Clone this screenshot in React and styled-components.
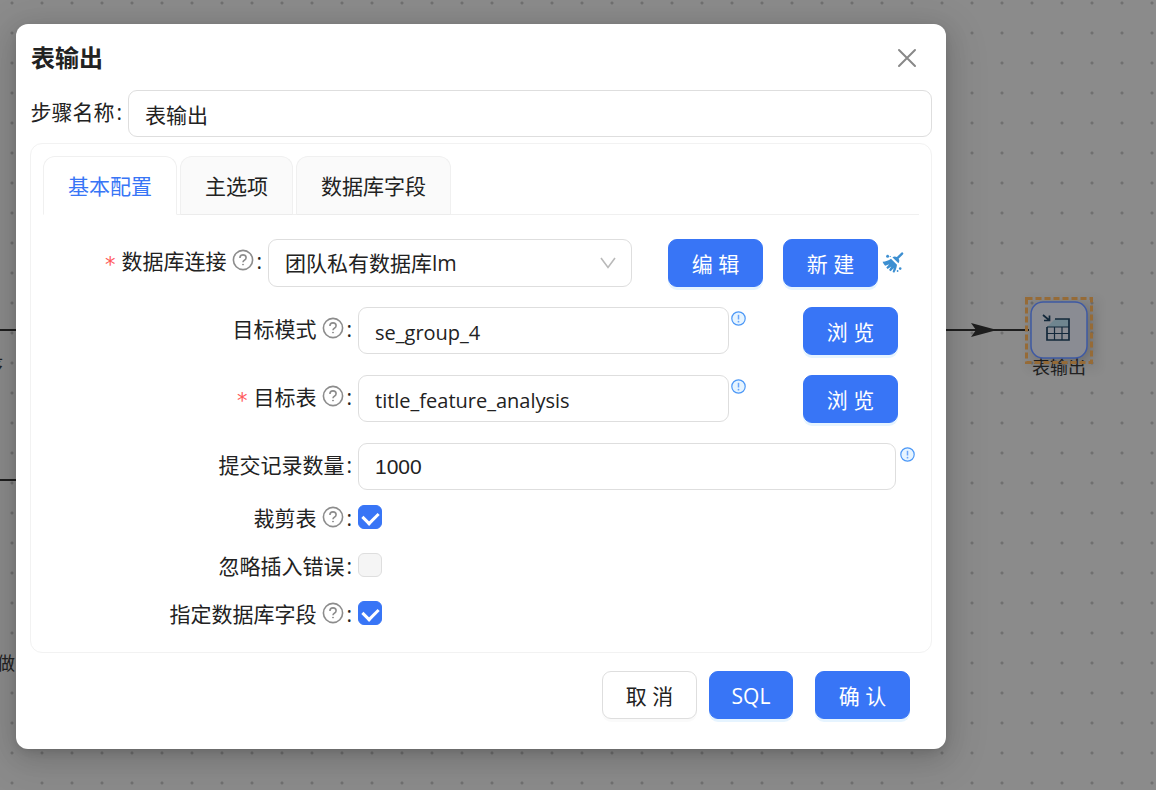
import React from "react";
import styled, { createGlobalStyle } from "styled-components";

const latin = '"Open Sans", "Noto Sans CJK SC", sans-serif';
const blue = "#3875f6";

const GlobalStyle = createGlobalStyle`
  * { box-sizing: border-box; }
  body {
    margin: 0;
    font-family: ${latin};
    font-size: 21px;
    line-height: 32px;
    color: #222;
    overflow: hidden;
  }
  button, input, select { font: inherit; color: inherit; }
`;

const Page = styled.div`
  position: relative;
  min-height: 100vh;
  overflow: hidden;
  background-color: #8b8b8b;
  background-image: radial-gradient(circle, #707070 1px, transparent 2px);
  background-size: 30px 30px;
  background-position: -3px -12px;
`;

const Canvas = styled.div`
  position: absolute;
  inset: 0;
`;

const Wires = styled.svg`
  position: absolute;
  left: 0;
  top: 0;
`;

const CanvasText = styled.span`
  position: absolute;
  left: ${(p) => p.$x}px;
  top: ${(p) => p.$y}px;
  font-size: 18px;
  line-height: 24px;
  white-space: nowrap;
  color: #222;
`;

const Node = styled.div`
  position: absolute;
  left: 1025px;
  top: 297px;
  width: 68px;
  height: 67px;
  filter: drop-shadow(4px 4px 5px rgba(0, 0, 0, 0.2));
`;

const Overlay = styled.div`
  position: relative;
  padding: 24px 210px 40px 16px;
`;

const Dialog = styled.form`
  background: #fff;
  border-radius: 12px;
  padding: 14px 14px 30px;
  box-shadow: 0 9px 42px 8px rgba(0, 0, 0, 0.09), 0 6px 24px rgba(0, 0, 0, 0.14), 0 3px 9px -2px rgba(0, 0, 0, 0.12);
`;

const Header = styled.header`
  display: flex;
  justify-content: space-between;
  align-items: center;
  height: 40px;
  margin-bottom: 12px;
  padding: 0 14px 0 1px;
`;

const Title = styled.h1`
  margin: 0;
  font-size: 24px;
  line-height: 36px;
  font-weight: 700;
`;

const CloseButton = styled.button`
  display: grid;
  place-items: center;
  padding: 0;
  width: 22px;
  height: 22px;
  border: 0;
  background: none;
  color: #888;
`;

const Row = styled.div`
  display: flex;
  align-items: flex-start;
  min-height: ${(p) => p.$height || 48}px;
  padding-right: ${(p) => p.$end || 0}px;
`;

const Label = styled.label`
  flex: none;
  display: flex;
  align-items: center;
  justify-content: flex-end;
  width: ${(p) => p.$width}px;
  height: ${(p) => (p.$compact ? 26 : 44)}px;
  padding-right: 6px;
  white-space: nowrap;
`;

const Required = styled.span`
  padding-top: 8px;
  margin-right: 6px;
  color: #ff5b5b;
  font-family: "DejaVu Sans", sans-serif;
  line-height: 24px;
`;

const Help = styled.svg`
  margin: 0 0 2px 6px;
  color: #8c8c8c;
`;

const Colon = styled.span`
  margin-left: 2px;
`;

const TextInput = styled.input`
  flex: 1;
  min-width: 0;
  height: 47px;
  padding: ${(p) => (p.$latin ? 3 : 0)}px 16px 0;
  border: 1px solid #dedede;
  border-radius: 9px;
  background: #fff;
  outline: none;
  font-family: ${(p) => (p.$number ? '"Liberation Sans", sans-serif' : "inherit")};
  font-size: ${(p) => (p.$latin ? 20 : 21)}px;
`;

const SelectBox = styled.div`
  position: relative;
  flex: 1;
  display: flex;
  margin-right: 36px;
`;

const Select = styled.select`
  appearance: none;
  width: 100%;
  height: 48px;
  padding: 0 16px;
  border: 1px solid #dedede;
  border-radius: 9px;
  background: #fff;
  outline: none;
`;

const Chevron = styled.svg`
  position: absolute;
  right: 16px;
  top: 16px;
  pointer-events: none;
`;

const Button = styled.button`
  flex: none;
  height: 48px;
  padding: 2px 0 0;
  width: ${(p) => p.$width || 95}px;
  border: 1px solid ${(p) => (p.$plain ? "#dedede" : blue)};
  border-radius: 9px;
  background: ${(p) => (p.$plain ? "#fff" : blue)};
  color: ${(p) => (p.$plain ? "#222" : "#fff")};
  box-shadow: 0 3px 0 ${(p) => (p.$plain ? "rgba(0, 0, 0, 0.02)" : "rgba(5, 145, 255, 0.1)")};
`;

const Card = styled.section`
  margin-top: 5px;
  padding: 12px 12px 25px;
  border: 1px solid #f2f2f2;
  border-radius: 12px;
`;

const Tabs = styled.div`
  display: flex;
  gap: 3px;
  border-bottom: 1px solid #f0f0f0;
  margin-bottom: 24px;
`;

const Tab = styled.button`
  height: 59px;
  margin-bottom: -1px;
  padding: 0 24px;
  border: 1px solid #f0f0f0;
  border-bottom-color: ${(p) => (p.$active ? "#fff" : "#ececec")};
  border-radius: 12px 12px 0 0;
  background: ${(p) => (p.$active ? "#fff" : "#fafafa")};
  color: ${(p) => (p.$active ? blue : "#222")};
`;

const Fields = styled.div`
  display: flex;
  flex-direction: column;
  gap: 20px;
`;

const Checks = styled.div`
  display: flex;
  flex-direction: column;
  gap: 22px;
  margin-top: 14px;
`;

const Info = styled.svg`
  flex: none;
  margin: 4px 0 0 ${(p) => p.$gap}px;
`;

const Spacer = styled.span`
  flex: none;
  width: ${(p) => p.$width}px;
`;

const IconButton = styled.button`
  flex: none;
  padding: 0;
  margin: 13px 0 0 4px;
  border: 0;
  background: none;
  line-height: 0;
`;

const Checkbox = styled.input`
  appearance: none;
  display: grid;
  justify-content: center;
  margin: 0;
  width: 24px;
  height: 24px;
  border: 1px solid #dedede;
  border-radius: 6px;
  background: #f5f5f5;

  &:checked {
    border-color: ${blue};
    background: ${blue};
  }

  &:checked::after {
    content: "";
    width: 8px;
    height: 12px;
    margin-top: 3px;
    border: solid #fff;
    border-width: 0 3px 3px 0;
    transform: rotate(45deg);
  }
`;

const Footer = styled.footer`
  display: flex;
  justify-content: flex-end;
  margin-top: 18px;
  padding-right: 22px;
`;

function HelpIcon() {
  return (
    <Help width="22" height="22" viewBox="0 0 22 22" fill="none" stroke="currentColor" strokeWidth="1.6">
      <circle cx="11" cy="11" r="9.6" />
      <path d="M7.9 8.9c0-1.800 1.300-3 3.100-3s3.100 1.100 3.100 2.800c0 1.300-.8 2-1.700 2.500-.9.500-1.400 1-1.400 2" />
      <circle cx="11" cy="15.600" r=".5" fill="currentColor" strokeWidth="1" />
    </Help>
  );
}

function InfoIcon({ gap }) {
  return (
    <Info $gap={gap} width="15" height="15" viewBox="0 0 15 15">
      <circle cx="7.500" cy="7.500" r="6.700" fill="#e6f4ff" stroke="#4b97f7" strokeWidth="1.200" />
      <path d="M7.500 3.800v4.700" stroke="#6ba6fa" strokeWidth="1.500" />
      <circle cx="7.500" cy="10.700" r=".9" fill="#6ba6fa" />
    </Info>
  );
}

function BroomIcon() {
  return (
    <svg width="22" height="22" viewBox="0 0 22 22" fill="#3d8fd1">
      <path d="M20.600.4c.9.600 1 1.400.3 2.100l-4.300 4.200c1 1.500.9 3-.2 4.500L10.400 5.300c1.500-1.100 3-1.200 4.500-.2L19 .9c.5-.5 1-.8 1.600-.5z" />
      <path d="M9 6.800l6 6c-.4 3-1.200 5.700-2.800 8l-1.600-.8 1.200-4-3.100 3.300-1.700-1.200 2.300-3.700-3.700 2.500-1.300-1.400 2.900-3.200-4 1.500C1.900 12.600 1.100 11.300.6 9.800 3.800 9.600 6.600 8.600 9 6.800z" />
      <circle cx="5.600" cy="4.200" r="1.500" />
      <circle cx="18.200" cy="16.600" r="1.300" />
      <circle cx="15.600" cy="19" r=".9" />
      <circle cx="8.300" cy="4.500" r=".6" />
    </svg>
  );
}

function Caption({ id, text, width, compact, required, help }) {
  return (
    <Label htmlFor={id} $width={width} $compact={compact}>
      {required && <Required>*</Required>}
      {text}
      {help && <HelpIcon />}
      <Colon>:</Colon>
    </Label>
  );
}

const checks = [
  { id: "truncate", text: "裁剪表", help: true, on: true },
  { id: "ignore", text: "忽略插入错误", help: false, on: false },
  { id: "specify", text: "指定数据库字段", help: true, on: true },
];

export default function App() {
  return (
    <>
      <GlobalStyle />
      <Page>
        <Canvas>
          <Wires width="1156" height="790" stroke="#1e1e1e" strokeWidth="2">
            <path d="M0 330H16M0 480H16M940 330H1029" />
            <path d="M971 323L997 330L971 337L976 330Z" fill="#1e1e1e" stroke="none" />
          </Wires>
          <CanvasText $x={-15} $y={353}>序</CanvasText>
          <CanvasText $x={-3} $y={651}>做</CanvasText>
          <CanvasText $x={1032} $y={355}>表输出</CanvasText>
          <Node>
            <svg width="68" height="67" viewBox="0 0 68 67" fill="none">
              <rect x="6" y="5" width="56" height="56" rx="12" fill="#8a8c93" stroke="#3e59a4" strokeWidth="1.500" />
              <rect x="1.500" y="1.500" width="65" height="64" stroke="#966b37" strokeWidth="3" strokeDasharray="6 3" />
              <path d="M30 22h14v8H22z" fill="#6f858f" />
              <path d="M30 22h14v21H22V30" stroke="#13283b" strokeWidth="1.700" />
              <path d="M22 30h22M22 36.500h22M29.500 30v13M37 30v13" stroke="#13283b" strokeWidth="1.200" />
              <path d="M18 18l6 5M24.500 18.500v5h-5.500" stroke="#13283b" strokeWidth="1.700" />
            </svg>
          </Node>
        </Canvas>
        <Overlay>
          <Dialog role="dialog" aria-labelledby="title">
            <Header>
              <Title id="title">表输出</Title>
              <CloseButton type="button" aria-label="关闭">
                <svg width="20" height="20" viewBox="0 0 20 20" stroke="currentColor" strokeWidth="2" strokeLinecap="round">
                  <path d="M2 2l16 16M18 2L2 18" />
                </svg>
              </CloseButton>
            </Header>
            <Row>
              <Caption id="step" text="步骤名称" width={98} />
              <TextInput id="step" defaultValue="表输出" />
            </Row>
            <Card>
              <Tabs role="tablist">
                <Tab type="button" role="tab" aria-selected="true" $active>基本配置</Tab>
                <Tab type="button" role="tab" aria-selected="false">主选项</Tab>
                <Tab type="button" role="tab" aria-selected="false">数据库字段</Tab>
              </Tabs>
              <Fields>
                <Row $end={15}>
                  <Caption id="conn" text="数据库连接" width={225} required help />
                  <SelectBox>
                    <Select id="conn">
                      <option>团队私有数据库lm</option>
                    </Select>
                    <Chevron width="16" height="16" viewBox="0 0 16 16" fill="none" stroke="#b9b9b9" strokeWidth="1.600">
                      <path d="M1 3l7 9.500L15 3" />
                    </Chevron>
                  </SelectBox>
                  <Button type="button">编 辑</Button>
                  <Spacer $width={20} />
                  <Button type="button">新 建</Button>
                  <IconButton type="button" aria-label="清除">
                    <BroomIcon />
                  </IconButton>
                </Row>
                <Row $end={21}>
                  <Caption id="schema" text="目标模式" width={315} help />
                  <TextInput id="schema" defaultValue="se_group_4" $latin />
                  <InfoIcon gap={2} />
                  <Spacer $width={57} />
                  <Button type="button">浏 览</Button>
                </Row>
                <Row $end={21}>
                  <Caption id="table" text="目标表" width={315} required help />
                  <TextInput id="table" defaultValue="title_feature_analysis" $latin />
                  <InfoIcon gap={2} />
                  <Spacer $width={57} />
                  <Button type="button">浏 览</Button>
                </Row>
                <Row $end={4}>
                  <Caption id="size" text="提交记录数量" width={315} />
                  <TextInput id="size" defaultValue="1000" $number />
                  <InfoIcon gap={4} />
                </Row>
              </Fields>
              <Checks>
                {checks.map((c) => (
                  <Row key={c.id} $height={26}>
                    <Caption id={c.id} text={c.text} width={315} compact help={c.help} />
                    <Checkbox id={c.id} type="checkbox" defaultChecked={c.on} />
                  </Row>
                ))}
              </Checks>
            </Card>
            <Footer>
              <Button type="button" $plain>取 消</Button>
              <Spacer $width={12} />
              <Button type="button" $width={84}>SQL</Button>
              <Spacer $width={22} />
              <Button type="button">确 认</Button>
            </Footer>
          </Dialog>
        </Overlay>
      </Page>
    </>
  );
}
